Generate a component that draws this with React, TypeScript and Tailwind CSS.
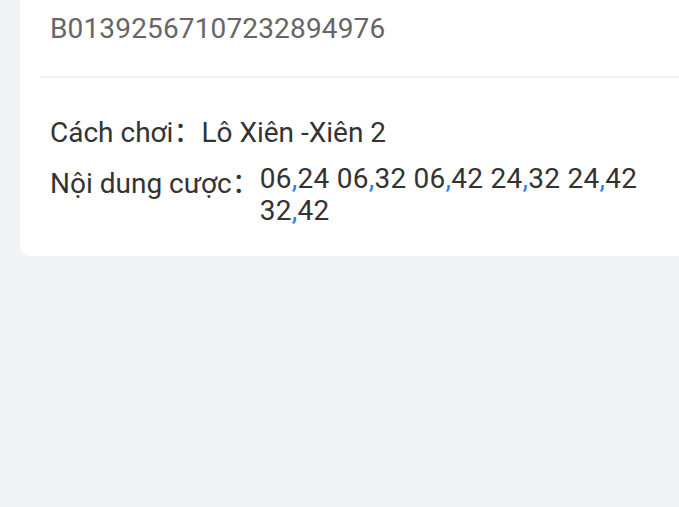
const picks = ['06,24', '06,32', '06,42', '24,32', '24,42', '32,42'];

function Pair({ value }: { value: string }) {
  const [a, b] = value.split(',');
  return (
    <span className="whitespace-nowrap">
      {a}
      <span className="text-[#2f7cf6]">,</span>
      {b}
    </span>
  );
}

export default function App() {
  return (
    <div
      className="w-full h-[507px] overflow-hidden bg-[#f2f3f5]"
      style={{ fontFamily: 'Roboto, "Noto Sans CJK SC", sans-serif' }}
    >
      <div className="ml-[20px] w-[690px] bg-white rounded-b-[10px] pb-[29px]">
        {/* Order id */}
        <div className="pt-[9px] pl-[30px] text-[28px] leading-[40px] tracking-[0.15px] text-[#666]">
          B01392567107232894976
        </div>
        <div className="ml-[20px] mt-[27px] h-[2px] bg-[#f0f1f3]"></div>

        {/* Details */}
        <div className="pl-[30px] pr-[30px] pt-[35px] text-[28px] text-[#333]">
          <div className="flex leading-[40px]">
            <span>Cách chơi：</span>
            <span>Lô Xiên -Xiên 2</span>
          </div>
          <div className="flex items-start mt-[8px]">
            <span className="leading-[40px] mt-[3px] whitespace-nowrap">Nội dung cược：</span>
            <div className="flex-1 leading-[32px] mt-[2px] tracking-[0.25px]">
              {picks.map((p, i) => (
                <span key={p}>
                  <Pair value={p} />
                  {i < picks.length - 1 ? ' ' : ''}
                </span>
              ))}
            </div>
          </div>
        </div>
      </div>
    </div>
  );
}
